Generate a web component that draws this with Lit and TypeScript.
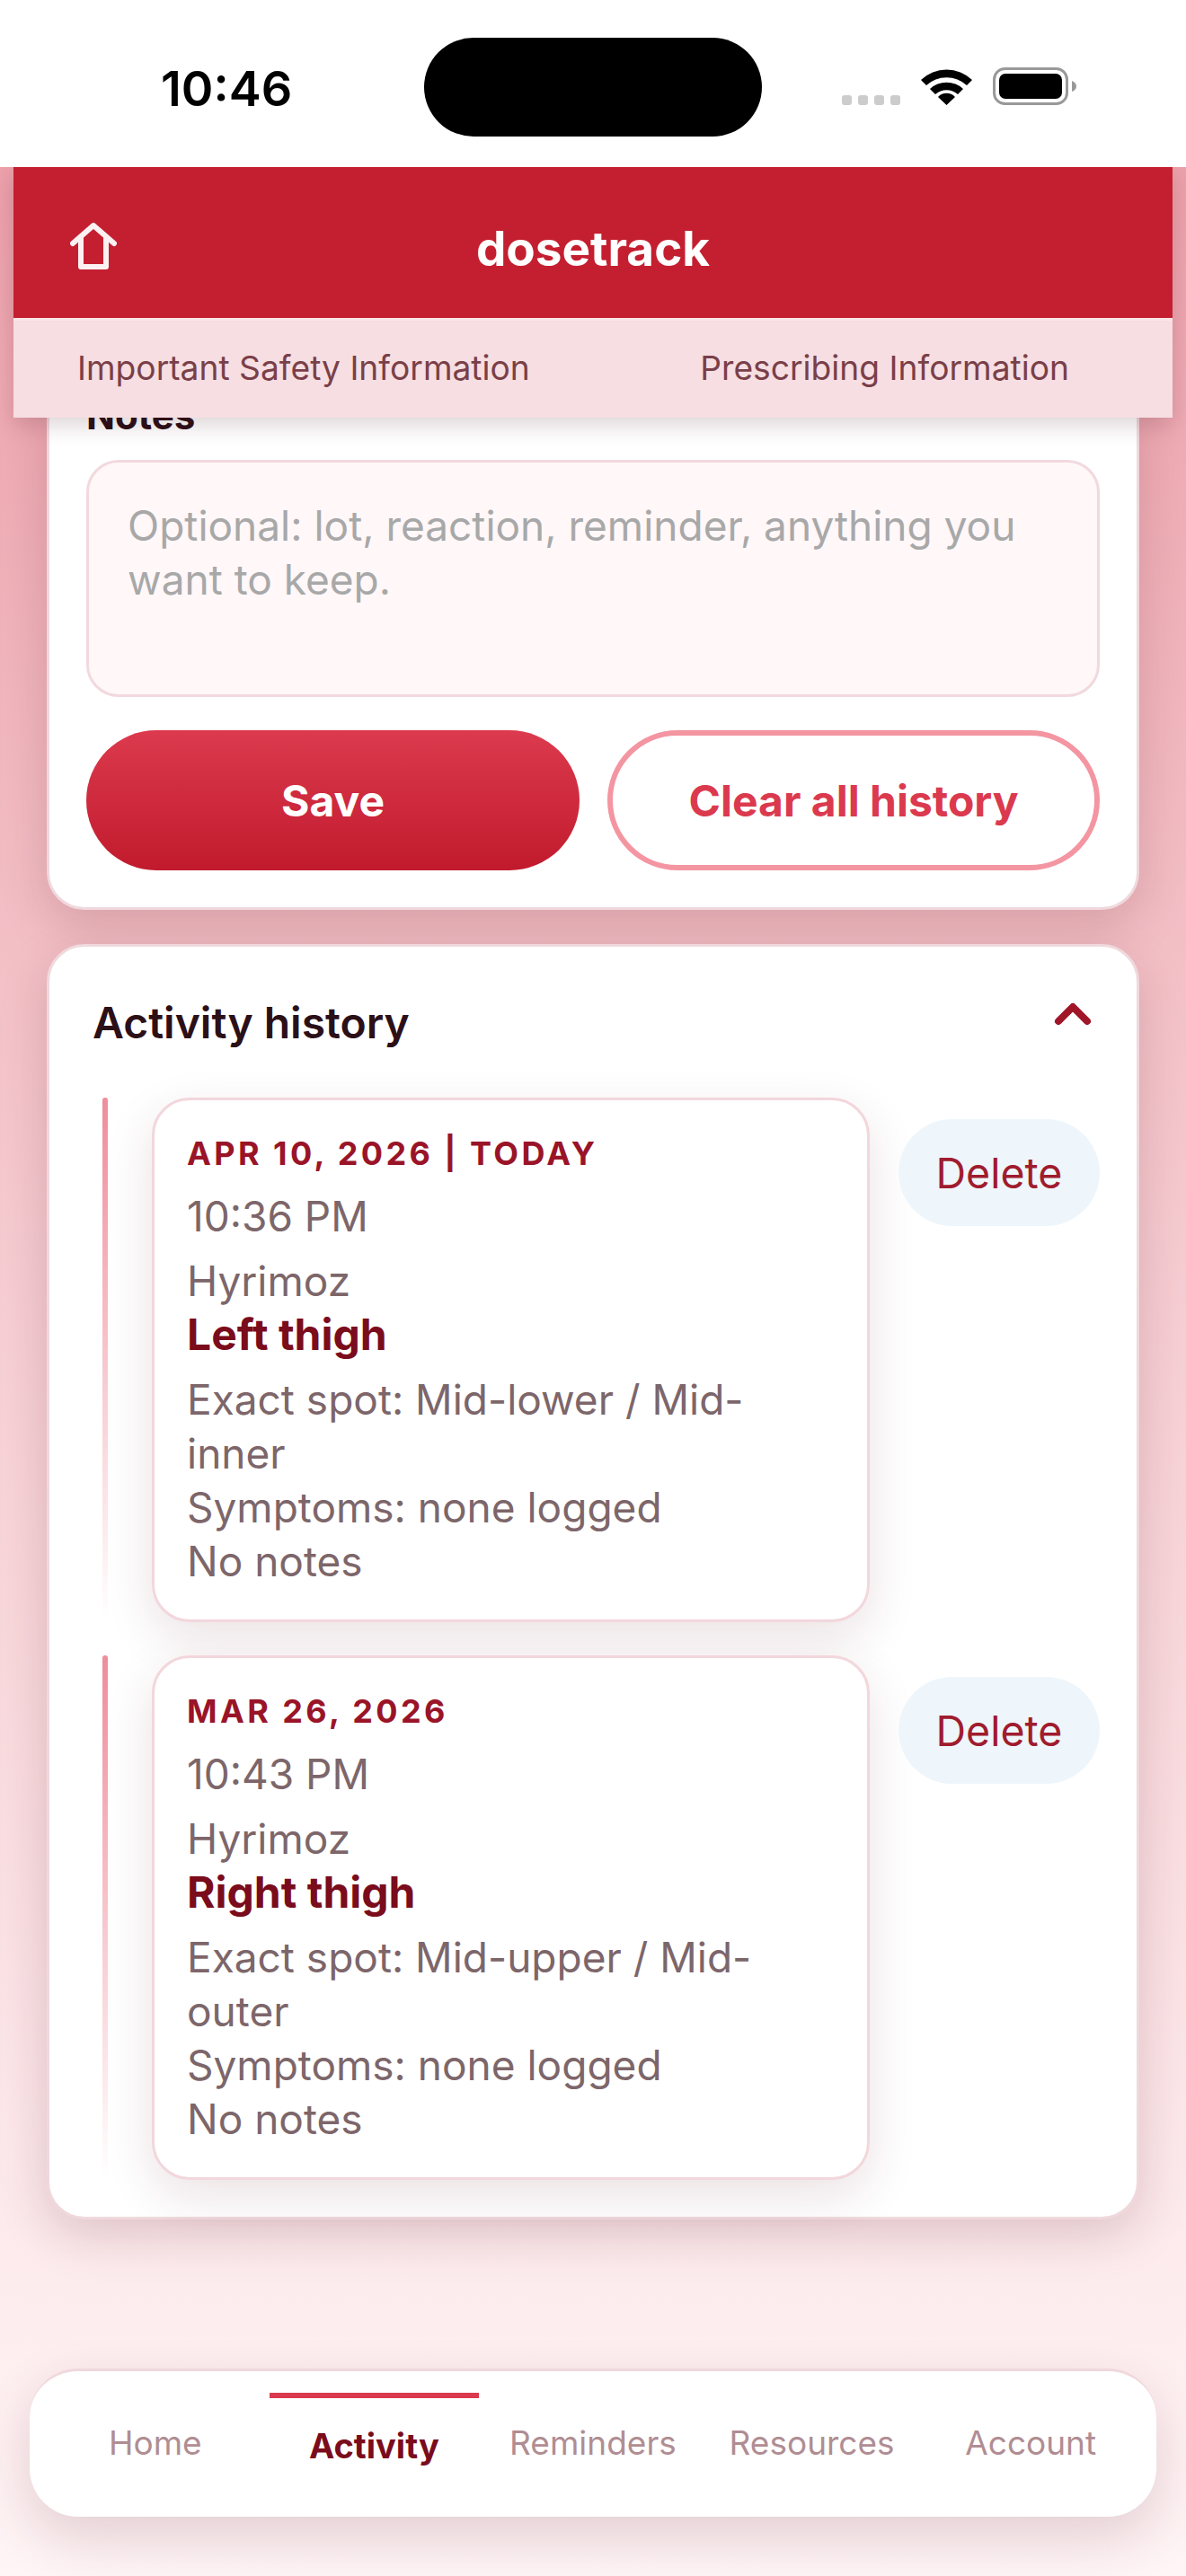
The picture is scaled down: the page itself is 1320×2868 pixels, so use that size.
import { LitElement, html, css } from "lit";
import { customElement } from "lit/decorators.js";

const entries = [
  { date: "APR 10, 2026 | TODAY", time: "10:36 PM", side: "Left thigh", spot: "Exact spot: Mid-lower / Mid-inner" },
  { date: "MAR 26, 2026", time: "10:43 PM", side: "Right thigh", spot: "Exact spot: Mid-upper / Mid-outer" },
];

@customElement("app-root")
export class AppRoot extends LitElement {
  static styles = css`
    :host { display: block; width: 1320px; height: 2868px; position: relative; overflow: hidden; font-family: Inter, "Liberation Sans", sans-serif; background: linear-gradient(180deg, #eb9aa5 0%, #f6cdd2 50%, #fff5f6 100%); }
    .status { height: 186px; background: #fff; display: flex; align-items: center; position: relative; z-index: 3; }
    .clock { font-size: 54px; font-weight: 600; color: #000; margin-left: 179px; width: 293px; padding-top: 10px; }
    .island { width: 376px; height: 110px; border-radius: 55px; background: #000; align-self: flex-start; margin-top: 42px; }
    .sysicons { display: flex; align-items: flex-end; margin-left: 89px; height: 42px; margin-top: 6px; }
    .dots { display: flex; gap: 7px; margin-right: 23px; }
    .dots i { width: 11px; height: 11px; border-radius: 3px; background: #ccc; display: block; }
    .battery { margin-left: 23px; }
    .topbar { position: relative; z-index: 2; margin: 0 15px; box-shadow: 0 8px 24px rgba(60, 10, 20, 0.18); }
    .brand { height: 168px; box-sizing: border-box; padding-top: 14px; background: #c41f30; display: flex; align-items: center; justify-content: center; position: relative; }
    .brand svg { position: absolute; left: 63px; top: 62px; }
    .brand h1 { margin: 0; color: #fff; font-size: 53px; font-weight: 700; }
    .links { height: 111px; box-sizing: border-box; background: #f6dee2; border-top: 3px solid #f9e6e9; display: flex; align-items: center; padding: 0 115px 4px 71px; justify-content: space-between; font-size: 37.2px; color: #7a3f48; }
    main { padding: 0 52px; }
    .card { background: #fff; border: 3px solid #efd9dd; border-radius: 42px; box-shadow: 0 18px 54px rgba(90, 20, 35, 0.18); padding: 0 41px; }
    .form { margin-top: -41px; padding-bottom: 41px; margin-bottom: 38px; }
    .notes { font-size: 42px; font-weight: 700; color: #2c1018; line-height: 72px; height: 72px; }
    .area { margin-top: 13px; height: 264px; box-sizing: border-box; border: 3px solid #f1d9de; border-radius: 36px; background: #fff7f8; padding: 40px 43px; font-size: 46px; line-height: 60px; color: #a8a8a8; }
    .actions { display: flex; gap: 31px; margin-top: 37px; }
    .btn { height: 156px; box-sizing: border-box; border-radius: 78px; display: flex; align-items: center; justify-content: center; font-size: 48px; font-weight: 700; }
    .save { flex: 0 0 549px; background: linear-gradient(180deg, #dc3a4e, #c11a2d); color: #fff; }
    .clear { flex: 1; background: #fff; border: 6px solid #f495a2; color: #db3a4e; }
    .history { padding-bottom: 41px; }
    .hhead { display: flex; justify-content: space-between; align-items: center; height: 168px; padding: 0 6px 0 7px; }
    .hhead h2 { margin: 0; font-size: 48px; font-weight: 600; color: #2c1018; }
    .hhead svg { margin: -18px 3px 0 0; }
    .rows { display: flex; flex-direction: column; gap: 37px; }
    .row { display: flex; align-items: stretch; }
    .rail { width: 6px; border-radius: 3px; margin: 0 49px 0 18px; background: linear-gradient(180deg, #ef8d9c, #fff); flex: none; }
    .entry { flex: 1; background: #fff; border: 3px solid #f2d7dc; border-radius: 42px; padding: 32px 36px 35px; box-shadow: 0 18px 54px rgba(90, 20, 35, 0.12); font-size: 46px; line-height: 60px; color: #7d666a; }
    .date { font-size: 36px; font-weight: 700; letter-spacing: 3.4px; color: #9a1428; line-height: 54px; }
    .time { margin-top: 13px; margin-bottom: 12px; }
    .side { font-size: 48px; font-weight: 700; color: #7a0c1c; margin-bottom: 12px; }
    .delete { flex: none; width: 224px; height: 119px; align-self: flex-start; margin: 24px 0 0 32px; border-radius: 60px; background: #eff6fb; color: #a01c2e; font-size: 46.5px; display: flex; align-items: center; justify-content: center; }
    .nav { position: absolute; left: 33px; top: 2637px; width: 1254px; height: 165px; box-sizing: border-box; background: #fff; border-top: 3px solid #f0d8dc; border-radius: 54px; box-shadow: 0 24px 60px rgba(90, 20, 35, 0.16); display: flex; padding: 0 18px; }
    .tab { flex: 1; text-align: center; font-size: 37px; color: #b08d93; padding-top: 57px; position: relative; }
    .tab.on { color: #7a0c1c; font-weight: 700; font-size: 38px; padding-top: 60px; }
    .tab.on::before { content: ""; position: absolute; left: 5px; right: 5px; top: 24px; height: 6px; background: #db3a4e; }
  `;

  render() {
    return html`
      <div class="status">
        <div class="clock">10:46</div>
        <div class="island"></div>
        <div class="sysicons">
          <div class="dots"><i></i><i></i><i></i><i></i></div>
          <svg width="57" height="42" viewBox="0 0 57 42"><path d="M0 14 A41 41 0 0 1 57 14 L51 20 A33 33 0 0 0 6 20 Z M10 24 A27 27 0 0 1 47 24 L41 30 A19 19 0 0 0 16 30 Z M19 33 A13 13 0 0 1 38 33 L28.5 42 Z" fill="#000"/></svg>
          <svg class="battery" width="93" height="42" viewBox="0 0 93 42"><rect x="1.5" y="1.5" width="81" height="39" rx="12" fill="none" stroke="#999" stroke-width="3"/><rect x="7" y="7" width="70" height="28" rx="7" fill="#000"/><path d="M88 15 q5 2 5 6 q0 4 -5 6 Z" fill="#999"/></svg>
        </div>
      </div>
      <div class="topbar">
        <div class="brand">
          <svg width="52" height="52" viewBox="0 0 52 52"><path d="M3 23 L26 3 L49 23 M12 17 V49 H40 V17" fill="none" stroke="#fbf0f2" stroke-width="6" stroke-linecap="round" stroke-linejoin="round"/></svg>
          <h1>dosetrack</h1>
        </div>
        <div class="links"><span>Important Safety Information</span><span>Prescribing Information</span></div>
      </div>
      <main>
        <section class="card form">
          <div class="notes">Notes</div>
          <div class="area">Optional: lot, reaction, reminder, anything you want to keep.</div>
          <div class="actions"><div class="btn save">Save</div><div class="btn clear">Clear all history</div></div>
        </section>
        <section class="card history">
          <div class="hhead">
            <h2>Activity history</h2>
            <svg width="42" height="26" viewBox="0 0 42 26"><path d="M5 21 L21 5 L37 21" fill="none" stroke="#a01528" stroke-width="8" stroke-linecap="round" stroke-linejoin="round"/></svg>
          </div>
          <div class="rows">
            ${entries.map((e) => html`
              <div class="row">
                <div class="rail"></div>
                <div class="entry">
                  <div class="date">${e.date}</div>
                  <div class="time">${e.time}</div>
                  <div>Hyrimoz</div>
                  <div class="side">${e.side}</div>
                  <div>${e.spot}</div>
                  <div>Symptoms: none logged</div>
                  <div>No notes</div>
                </div>
                <div class="delete">Delete</div>
              </div>`)}
          </div>
        </section>
      </main>
      <nav class="nav">
        <div class="tab">Home</div>
        <div class="tab on">Activity</div>
        <div class="tab">Reminders</div>
        <div class="tab">Resources</div>
        <div class="tab">Account</div>
      </nav>
    `;
  }
}
